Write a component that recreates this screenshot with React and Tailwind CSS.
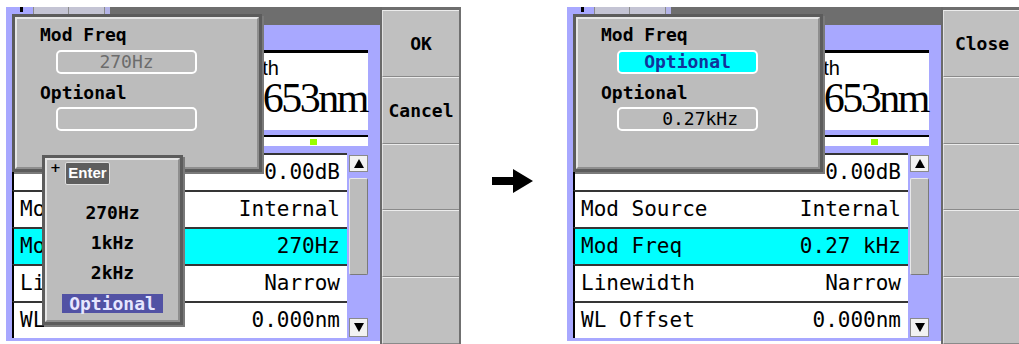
import React from 'react'

const mono = "font-['DejaVu_Sans_Mono',monospace]"

// One list row: label on the left, value on the right.
function Row({ label, value, active }) {
  return (
    <div className={`h-[37px] flex items-center justify-between border-t-2 border-t-[#353535] border-l-2 border-l-black pl-[6px] pr-[7px] text-[21px] text-black ${mono} ${active ? 'bg-[#00ffff]' : 'bg-white'}`}>
      <span className="whitespace-pre">{label}</span>
      <span className="whitespace-pre">{value}</span>
    </div>
  )
}

function ScrollBar() {
  return (
    <div className="w-[19px] flex flex-col">
      <div className="mt-[2px] h-[17px] bg-[#f2f2f2] border border-[#8a8a8a] flex items-center justify-center">
        <svg width="10" height="9" viewBox="0 0 10 9"><path d="M5 0 L10 9 L0 9 Z" fill="#000" /></svg>
      </div>
      <div className="mt-[6px] h-[97px] bg-[#bcbcbc] border border-t-[#e8e8e8] border-l-[#e8e8e8] border-r-[#7a7a7a] border-b-[#7a7a7a] rounded-[2px]" />
      <div className="mt-auto mb-[1px] h-[19px] bg-[#f2f2f2] border border-[#8a8a8a] flex items-center justify-center">
        <svg width="10" height="9" viewBox="0 0 10 9"><path d="M0 0 L10 0 L5 9 Z" fill="#000" /></svg>
      </div>
    </div>
  )
}

function Field({ children, cyan, align = 'center', color = 'text-black' }) {
  return (
    <div className={`ml-[39px] w-[141px] h-[24px] rounded-[5px] border-2 border-white flex items-center text-[18px] leading-none ${mono} ${color} ${cyan ? 'bg-[#00ffff]' : 'bg-[#bcbcbc]'} ${align === 'end' ? 'justify-end pr-[18px]' : 'justify-center'}`}>
      {children}
    </div>
  )
}

// Overlaid edit dialog in the top-left corner.
function Dialog({ after }) {
  return (
    <div className="absolute left-[6px] top-[7px] w-[250px] h-[158px] border-[3px] border-[#5c5c5c] bg-[#a4a4a4] shadow-[2px_2px_0_#7a7a7a]">
      <div className="w-full h-full border-2 border-t-[#e6e6e6] border-l-[#e6e6e6] border-r-[#8e8e8e] border-b-[#8e8e8e] bg-[#bcbcbc] flex flex-col">
        <div className={`mt-[6px] ml-[23px] h-[20px] leading-[20px] text-[18px] font-bold text-black ${mono}`}>Mod Freq</div>
        <div className="mt-[5px]">
          {after ? (
            <Field cyan color="text-[#12329a] font-bold">Optional</Field>
          ) : (
            <Field color="text-[#6c6c6c]">270Hz</Field>
          )}
        </div>
        <div className={`mt-[9px] ml-[23px] h-[20px] leading-[20px] text-[18px] font-bold text-black ${mono}`}>Optional</div>
        <div className="mt-[4px]">
          {after ? <Field align="end">0.27kHz</Field> : <Field />}
        </div>
      </div>
    </div>
  )
}

// Drop-down list with the frequency choices.
function Popup() {
  const items = ['270Hz', '1kHz', '2kHz']
  return (
    <div className="absolute left-[36px] top-[148px] w-[141px] h-[170px] border-[3px] border-[#5c5c5c] bg-[#bcbcbc] shadow-[2px_2px_0_#7a7a7a]">
      <div className="w-full h-full border-2 border-t-[#e6e6e6] border-l-[#e6e6e6] border-r-[#8e8e8e] border-b-[#8e8e8e] flex flex-col">
        <div className="h-[27px] flex items-start pl-[3px] pt-[2px]">
          <span className="w-[15px] text-[13px] leading-[12px] font-bold text-black font-['DejaVu_Sans',sans-serif]">+</span>
          <span className="h-[23px] w-[45px] bg-[#5e5e5e] border border-[#e0e0e0] rounded-[2px] flex items-center justify-center text-white text-[15px] font-bold font-['Liberation_Sans',Arial,sans-serif]">Enter</span>
        </div>
        <div className="mt-[11px] flex flex-col items-center">
          {items.map((t) => (
            <div key={t} className={`h-[30px] leading-[30px] text-[18px] font-bold text-black ${mono}`}>{t}</div>
          ))}
          <div className="h-[30px] flex items-center">
            <span className={`w-[101px] h-[19px] bg-[#5252a4] text-[#e6e6ff] text-[18px] font-bold leading-[19px] text-center ${mono}`}>Optional</span>
          </div>
        </div>
      </div>
    </div>
  )
}

function Screen({ after }) {
  const rows = [
    { label: '', value: '0.00dB' },
    { label: 'Mod Source', value: 'Internal' },
    { label: 'Mod Freq', value: after ? '0.27 kHz' : '270Hz', active: true },
    { label: 'Linewidth', value: 'Narrow' },
    { label: 'WL Offset', value: '0.000nm' },
  ]
  const buttons = after ? ['Close', '', '', '', ''] : ['OK', 'Cancel', '', '', '']
  return (
    <div className="relative shrink-0 w-[455px] h-[337px] mt-[7px] flex">
      <div className="w-[374px] h-[334px] bg-[#a8a8ff] flex flex-col">
        <div className="h-[18px] flex">
          <div className="w-[27px] relative">
            <div className="absolute left-[14px] top-0 w-[3px] h-[5px] bg-black" />
          </div>
          <div className="w-[77px] flex bg-[#b4b4e8]">
            <div className="w-[36px] border-x border-[#8a8a8a] bg-[#c4c4d4]" />
            <div className="w-[36px] border-r border-[#8a8a8a] bg-[#c4c4d4]" />
          </div>
          <div className="flex-1 bg-[#6e6e6e]" />
        </div>
        <div className="mt-[25px] ml-[6px] mr-[12px] h-[80px] border-t-[3px] border-black bg-white flex flex-col">
          <div className="pl-[162px] pt-[5px] h-[24px] leading-[20px] text-[20px] text-black font-['Liberation_Sans',Arial,sans-serif]">Wavelength</div>
          <div className="pr-[1px] text-right text-[42px] leading-[42px] tracking-[-2.5px] text-black font-['Liberation_Serif','Times_New_Roman',serif]">1552.653nm</div>
        </div>
        <div className="mt-[5px] ml-[6px] mr-[12px] h-[11px] border-t-2 border-black bg-white relative">
          <div className="absolute left-[298px] top-[2px] w-[7px] h-[6px] bg-[#99ff00]" />
        </div>
        <div className="mt-[7px] ml-[6px] flex gap-[2px]">
          <div className="w-[335px] flex flex-col">
            {rows.map((r, i) => (
              <Row key={i} {...r} />
            ))}
          </div>
          <ScrollBar />
        </div>
      </div>
      <div className="w-[81px] h-full bg-[#6e6e6e] pt-[3px] border-l-2 border-[#6a6a6a] border-r-2 border-r-[#707070] flex flex-col">
        {buttons.map((b, i) => (
          <div key={i} className={`flex-1 bg-[#c0c0c0] border-t border-t-[#ececec] border-b border-b-[#8a8a8a] border-l border-l-[#e2e2e2] flex items-center justify-center text-[18px] font-bold text-black ${mono}`}>
            {b}
          </div>
        ))}
      </div>
      <Dialog after={after} />
      {!after && <Popup />}
    </div>
  )
}

export default function App() {
  return (
    <div className="w-[1019px] h-[344px] overflow-hidden bg-white flex">
      <div className="w-[6px] shrink-0" />
      <Screen />
      <div className="w-[106px] shrink-0 pt-[169px] pl-[31px]">
        <svg width="42" height="24" viewBox="0 0 42 24">
          <path d="M0 8 H21 V0 L41 12 L21 24 V16 H0 Z" fill="#000" />
        </svg>
      </div>
      <Screen after />
    </div>
  )
}
